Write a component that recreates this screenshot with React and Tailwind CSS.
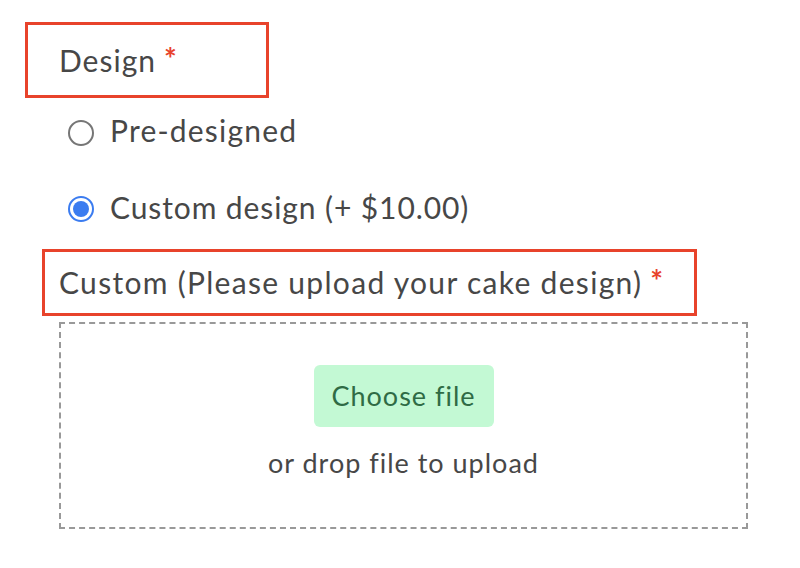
export default function App() {
  return (
    <div className="min-h-[568px] w-[800px] bg-white pl-[25px] pt-[22px] font-['Lato',sans-serif] tracking-[1px] text-[#474747]">
      {/* Design label */}
      <div className="flex h-[76px] w-[244px] items-center border-[3px] border-[#e8432b] pl-[31px] text-[30px]">
        <span>Design</span>
        <span className="ml-[8px] -mt-[4px] text-[30px] font-bold text-[#e8432b]">*</span>
      </div>

      {/* Options */}
      <label className="ml-[43px] mt-[15px] flex h-[40px] items-center gap-[16px] text-[30px]">
        <span className="h-[26px] w-[26px] rounded-full border-2 border-[#767676]" />
        <span className="pb-[6px] tracking-[1.2px]">Pre-designed</span>
      </label>
      <label className="ml-[43px] mt-[36px] flex h-[40px] items-center gap-[16px] text-[30px]">
        <span className="flex h-[26px] w-[26px] items-center justify-center rounded-full border-2 border-[#3b7cf0]">
          <span className="h-[16px] w-[16px] rounded-full bg-[#3b7cf0]" />
        </span>
        <span className="pb-[4px] tracking-[0.9px]">Custom design (+ $10.00)</span>
      </label>

      {/* Upload label */}
      <div className="ml-[17px] mt-[20px] flex h-[67px] w-[655px] items-center border-[3px] border-[#e8432b] pl-[14px] text-[30px]">
        <span className="tracking-[1.3px]">Custom (Please upload your cake design)</span>
        <span className="ml-[8px] -mt-[4px] text-[30px] font-bold text-[#e8432b]">*</span>
      </div>

      {/* Drop zone */}
      <div className="ml-[34px] mt-[6px] flex h-[207px] w-[689px] flex-col items-center border-2 border-dashed border-[#999] pt-[41px]">
        <button className="h-[62px] w-[180px] rounded-[6px] bg-[#c3f9d4] text-[27px] text-[#2f6b45]">
          Choose file
        </button>
        <p className="mt-[16px] text-[27px]">or drop file to upload</p>
      </div>
    </div>
  );
}
